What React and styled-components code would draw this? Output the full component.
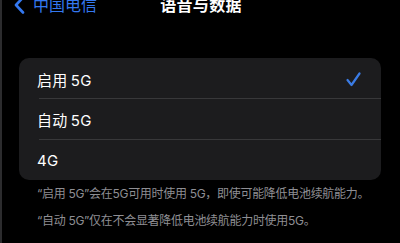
import React, { useState } from 'react';
import styled, { createGlobalStyle } from 'styled-components';

const GlobalStyle = createGlobalStyle`
	html, body {
		margin: 0;
		padding: 0;
		background: #000;
	}
	body {
		font-family: 'Inter', 'Noto Sans CJK SC', sans-serif;
		-webkit-font-smoothing: antialiased;
	}
`;

const Page = styled.div`
	width: 400px;
	height: 243px;
	overflow: hidden;
	background: #000;
	border-left: 2px solid #2c2c2e;
	box-sizing: border-box;
`;

const NavBar = styled.div`
	position: relative;
	height: 10px;
	display: flex;
	align-items: center;
	justify-content: center;
`;

const Back = styled.div`
	position: absolute;
	left: 11px;
	top: -5px;
	display: flex;
	align-items: center;
	gap: 8px;
	color: #3478f0;
	font-size: 16px;
	line-height: 20px;
`;

const Title = styled.div`
	color: #fff;
	font-size: 16px;
	font-weight: 700;
	line-height: 20px;
	letter-spacing: 0.3px;
`;

const Card = styled.div`
	margin: 48px 19px 0 17px;
	background: #1c1c1e;
	border-radius: 10px;
	overflow: hidden;
`;

const Row = styled.div`
	height: 40px;
	display: flex;
	align-items: center;
	justify-content: space-between;
	padding: 2px 20px 0 18px;
	box-sizing: border-box;
	position: relative;
	cursor: pointer;
	& + & {
		height: 41px;
	}
	& + &::before {
		content: '';
		position: absolute;
		top: 0;
		left: 20px;
		right: 0;
		height: 1px;
		background: #38383a;
	}
`;

const Label = styled.span`
	color: #fff;
	font-size: 15px;
	letter-spacing: 0.2px;
	word-spacing: -1px;
`;

const Notes = styled.div`
	padding: 5px 10px 0 35px;
`;

const Note = styled.p`
	margin: 0 0 10px;
	color: #8e8e93;
	font-size: 12px;
	line-height: 17px;
	letter-spacing: -0.3px;
	white-space: nowrap;
`;

const options = ['启用 5G', '自动 5G', '4G'];

export default function App() {
	const [selected, setSelected] = useState(0);

	return (
		<Page>
			<GlobalStyle />
			<NavBar>
				<Back>
					<svg width="12" height="18" viewBox="0 0 12 18">
						<path d="M10 1.5 L3 9 L10 16.5" fill="none" stroke="#3478f0" strokeWidth="2.6" strokeLinecap="round" strokeLinejoin="round" />
					</svg>
					中国电信
				</Back>
				<Title>语音与数据</Title>
			</NavBar>
			<Card>
				{options.map((opt, i) => (
					<Row key={opt} onClick={() => setSelected(i)}>
						<Label>{opt}</Label>
						{selected === i && (
							<svg width="15" height="15" viewBox="0 0 15 15">
								<path d="M1.5 8 L5.5 13 L13.5 1.5" fill="none" stroke="#3a7be4" strokeWidth="2.2" strokeLinecap="round" strokeLinejoin="round" />
							</svg>
						)}
					</Row>
				))}
			</Card>
			<Notes>
				<Note>“启用 5G”会在5G可用时使用 5G，即使可能降低电池续航能力。</Note>
				<Note>“自动 5G”仅在不会显著降低电池续航能力时使用5G。</Note>
			</Notes>
		</Page>
	);
}
